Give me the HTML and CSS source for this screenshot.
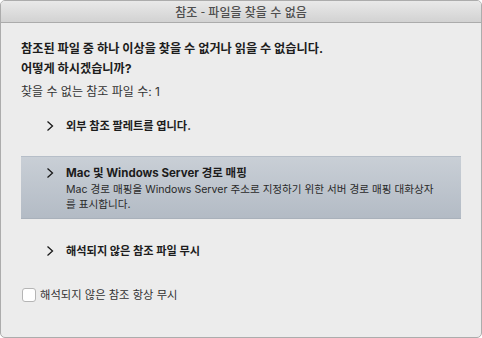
FILE: index.html
```html
<!DOCTYPE html>
<html lang="ko">
<head>
<meta charset="utf-8">
<link rel="stylesheet" href="styles.css">
</head>
<body>
<div class="window">
  <div class="titlebar">참조 - 파일을 찾을 수 없음</div>
  <div class="content">
    <p class="heading">참조된 파일 중 하나 이상을 찾을 수 없거나 읽을 수 없습니다.<br>어떻게 하시겠습니까?</p>
    <p class="count">찾을 수 없는 참조 파일 수: 1</p>
    <div class="option opt1">
      <span class="chev"><svg width="8" height="12" viewBox="0 0 8 12"><path d="M1.5 1.5 L6.5 6 L1.5 10.5" fill="none" stroke="#1a1a1a" stroke-width="1.3"/></svg></span>
      <div class="opt-text"><div class="opt-title">외부 참조 팔레트를 엽니다.</div></div>
    </div>
    <div class="option opt2 selected">
      <span class="chev"><svg width="8" height="12" viewBox="0 0 8 12"><path d="M1.5 1.5 L6.5 6 L1.5 10.5" fill="none" stroke="#1a1a1a" stroke-width="1.3"/></svg></span>
      <div class="opt-text">
        <div class="opt-title">Mac 및 Windows Server 경로 매핑</div>
        <div class="opt-desc">Mac 경로 매핑을 Windows Server 주소로 지정하기 위한 서버 경로 매핑 대화상자를 표시합니다.</div>
      </div>
    </div>
    <div class="option opt3">
      <span class="chev"><svg width="8" height="12" viewBox="0 0 8 12"><path d="M1.5 1.5 L6.5 6 L1.5 10.5" fill="none" stroke="#1a1a1a" stroke-width="1.3"/></svg></span>
      <div class="opt-text"><div class="opt-title">해석되지 않은 참조 파일 무시</div></div>
    </div>
    <label class="check"><span class="box"></span>해석되지 않은 참조 항상 무시</label>
  </div>
</div>
</body>
</html>
```
FILE: styles.css
```css
* { box-sizing: border-box; }
html, body { margin: 0; padding: 0; background: #ffffff; }
body {
  font-family: "Inter", "Noto Sans CJK KR", sans-serif;
  color: #1f1f1f;
}
.window {
  width: 482px;
  height: 338px;
  border: 1px solid #acacac;
  border-radius: 5px;
  background: #ececec;
  overflow: hidden;
  display: flex;
  flex-direction: column;
}
.titlebar {
  height: 22px;
  flex: none;
  background: linear-gradient(#e9e9e9, #d2d2d2);
  border-bottom: 1px solid #ababab;
  text-align: center;
  font-family: "Noto Sans CJK KR", sans-serif;
  font-size: 12px;
  font-weight: 500;
  line-height: 21px;
  color: #4e4e4e;
}
.content {
  padding: 0 20px 0 20px;
  display: flex;
  flex-direction: column;
}
.heading {
  margin: 16px 0 0 0;
  font-size: 12.2px;
  font-weight: bold;
  line-height: 20px;
  color: #1c1c1c;
}
.count {
  margin: 4px 0 0 0;
  font-size: 12px;
  line-height: 18px;
  color: #333;
}
.option {
  display: flex;
  align-items: flex-start;
  padding-left: 25px;
}
.chev {
  width: 20px;
  flex: none;
  display: flex;
  padding-top: 3px;
}
.opt-title {
  font-size: 11.2px;
  font-weight: bold;
  line-height: 18px;
  color: #1c1c1c;
}
.opt2 .opt-title { font-size: 11.5px; }
.opt-desc {
  font-size: 10.6px;
  line-height: 15px;
  color: #2a2a2a;
  margin-top: 0;
}
.opt1 { margin-top: 16px; }
.opt2 {
  margin: 21px 0 0 0;
  height: 63px;
  padding-top: 7px;
  padding-right: 26px;
  background: linear-gradient(#c9cfd6, #b3bbc5);
  border-top: 1px solid #b6bec8;
  border-bottom: 1px solid #a9b1bb;
}
.opt3 { margin-top: 23px; }
.check {
  margin-top: 27px;
  display: flex;
  align-items: center;
  font-size: 11.3px;
  line-height: 16px;
  color: #333;
}
.box {
  width: 14px;
  height: 14px;
  border: 1px solid #b5b5b5;
  border-radius: 3px;
  background: #fff;
  margin-right: 4px;
  margin-left: 1px;
}
```
